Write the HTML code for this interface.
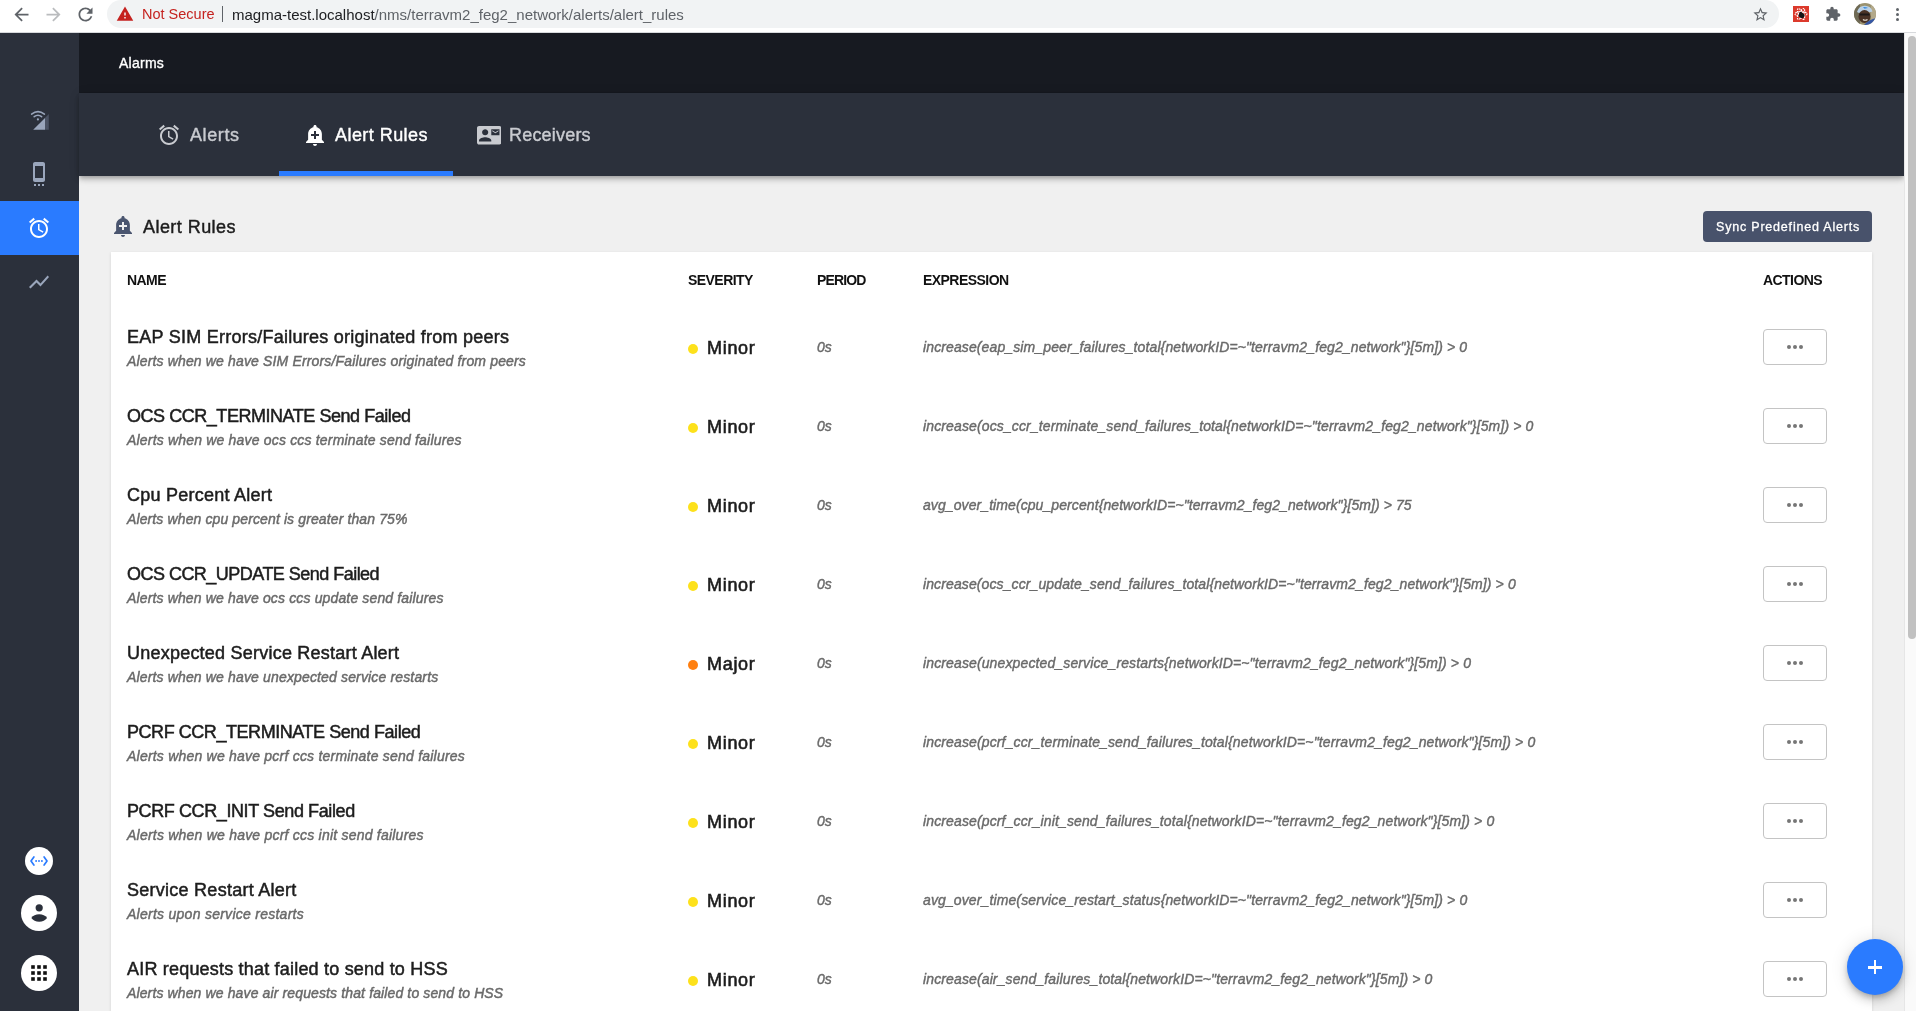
<!DOCTYPE html>
<html><head><meta charset="utf-8">
<style>
*{box-sizing:border-box;margin:0;padding:0}
html,body{width:1916px;height:1011px;overflow:hidden;background:#f0f0f0;font-family:"Liberation Sans",sans-serif}
.abs{position:absolute}
.t{position:absolute;white-space:nowrap;line-height:1;will-change:transform}
/* chrome */
#chrome{position:absolute;left:0;top:0;width:1916px;height:33px;background:#fff;border-bottom:1px solid #d7d9dc}
#pill{position:absolute;left:107px;top:0;width:1672px;height:28px;background:#f1f3f4;border-radius:0 0 14px 14px}
#pill2{position:absolute;left:107px;top:0px;width:1672px;height:28px;background:#f1f3f4;border-radius:14px}
/* sidebar */
#side{position:absolute;left:0;top:33px;width:79px;height:978px;background:#2b303b}
#header{position:absolute;left:79px;top:33px;width:1825px;height:60px;background:#171a21}
#tabs{position:absolute;left:79px;top:93px;width:1825px;height:83px;background:#2b303b;box-shadow:0 2px 4px -1px rgba(0,0,0,0.2),0 4px 5px 0 rgba(0,0,0,0.14),0 1px 10px 0 rgba(0,0,0,0.12)}
#scroll{position:absolute;left:1904px;top:33px;width:12px;height:978px;background:#fafafa;border-left:1px solid #e6e6e6}
#thumb{position:absolute;left:1908px;top:36px;width:8px;height:603px;background:#c1c1c1;border-radius:4px}
#card{position:absolute;left:111px;top:252px;width:1761px;height:780px;background:#fff;box-shadow:0 1px 3px rgba(0,0,0,0.12)}
.hd{font-size:14px;font-weight:bold;color:#111;letter-spacing:-0.55px;top:273.2px}
.ttl{font-size:18px;color:#1d1d1d;-webkit-text-stroke:0.5px #1d1d1d}
.sub{font-size:14px;font-style:italic;color:#6a6a6a;-webkit-text-stroke:0.45px #6a6a6a}
.sev{font-size:18px;color:#1d1d1d;-webkit-text-stroke:0.6px #1d1d1d;letter-spacing:0.7px}
.per{font-size:14px;font-style:italic;color:#6a6a6a;-webkit-text-stroke:0.4px #6a6a6a}
.exp{font-size:14px;font-style:italic;color:#6a6a6a;-webkit-text-stroke:0.4px #6a6a6a}
.dot{position:absolute;width:10px;height:10px;border-radius:5px}
.act{position:absolute;width:64px;height:36px;border:1px solid #c4c4c4;border-radius:4px;background:#fff}
.act i{position:absolute;top:15px;width:4px;height:4px;border-radius:2px;background:#767676}
</style></head><body>
<div id="chrome">
  <div id="pill2"></div>
</div>
<div id="side"></div>
<div id="header"></div>
<div id="tabs"></div>
<div id="scroll"></div>
<div id="thumb"></div>
<div id="card"></div>

<!-- header text -->
<div class="t" style="left:119px;top:56.2px;font-size:14px;color:#fff;letter-spacing:0.25px;-webkit-text-stroke:0.35px #fff">Alarms</div>
<!-- tabs -->
<svg class="abs" style="left:157px;top:123px" width="24" height="24" viewBox="0 0 24 24"><path fill="#c9cbd0" d="M22 5.72l-4.6-3.86-1.29 1.53 4.6 3.86L22 5.72zM7.88 3.39L6.6 1.86 2 5.71l1.29 1.53 4.59-3.85zM12.5 8H11v6l4.75 2.85.75-1.23-4-2.37V8zM12 4c-4.97 0-9 4.03-9 9s4.02 9 9 9c4.97 0 9-4.03 9-9s-4.03-9-9-9zm0 16c-3.87 0-7-3.13-7-7s3.13-7 7-7 7 3.13 7 7-3.13 7-7 7z"/></svg>
<div class="t" style="left:189.6px;top:125.8px;font-size:18px;color:#c9cbd0;letter-spacing:0.6px;-webkit-text-stroke:0.4px #c9cbd0">Alerts</div>
<svg class="abs" style="left:303px;top:123px" width="24" height="24" viewBox="0 0 24 24"><path fill="#fff" d="M10.01 21.01c0 1.1.89 1.99 1.99 1.99s1.99-.89 1.99-1.99h-3.98zm8.87-4.19V11c0-3.25-2.25-5.970-5.29-6.69v-.72C13.59 2.71 12.88 2 12 2s-1.59.71-1.59 1.59v.72C7.37 5.03 5.12 7.75 5.12 11v5.82L3 18.94V20h18v-1.06l-2.12-2.12zM16 13.01h-3v3h-2v-3H8V11h3V8h2v3h3v2.01z"/></svg>
<div class="t" style="left:335.3px;top:125.8px;font-size:18px;color:#fff;letter-spacing:0.45px;-webkit-text-stroke:0.4px #fff">Alert Rules</div>
<svg class="abs" style="left:476.5px;top:123px" width="24.5" height="24.5" viewBox="0 0 24 24"><path fill="#c9cbd0" d="M21 8V7l-3 2-3-2v1l3 2 3-2zm1-5H2C.9 3 0 3.9 0 5v14c0 1.1.9 2 2 2h20c1.1 0 1.99-.9 1.99-2L24 5c0-1.1-.9-2-2-2zM8 6c1.66 0 3 1.34 3 3s-1.34 3-3 3-3-1.34-3-3 1.34-3 3-3zm6 12H2v-1c0-2 4-3.1 6-3.1s6 1.1 6 3.1v1zm8-6h-8V6h8v6z"/></svg>
<div class="t" style="left:509.3px;top:125.8px;font-size:18px;color:#c9cbd0;letter-spacing:0.2px;-webkit-text-stroke:0.4px #c9cbd0">Receivers</div>
<div class="abs" style="left:279px;top:171px;width:174px;height:5px;background:#2a7bff"></div>
<!-- heading -->
<svg class="abs" style="left:110.7px;top:213.6px" width="24" height="24" viewBox="0 0 24 24"><path fill="#4a556f" d="M10.01 21.01c0 1.1.89 1.990 1.99 1.99s1.99-.89 1.99-1.99h-3.98zm8.87-4.19V11c0-3.25-2.25-5.97-5.29-6.69v-.72C13.59 2.71 12.88 2 12 2s-1.59.71-1.59 1.59v.72C7.37 5.03 5.12 7.75 5.12 11v5.82L3 18.94V20h18v-1.06l-2.12-2.12zM16 13.01h-3v3h-2v-3H8V11h3V8h2v3h3v2.01z"/></svg>
<div class="t" style="left:143.3px;top:217.8px;font-size:18px;color:#1d1d1d;letter-spacing:0.45px;-webkit-text-stroke:0.45px #1d1d1d">Alert Rules</div>
<div class="abs" style="left:1703px;top:211px;width:169px;height:31px;background:#48526b;border-radius:4px"></div>
<div class="t" style="left:1715.5px;top:220.7px;font-size:12.5px;color:#fff;letter-spacing:0.8px;-webkit-text-stroke:0.3px #fff">Sync Predefined Alerts</div>
<!-- FAB -->
<div class="abs" style="left:1847px;top:939px;width:56px;height:56px;border-radius:28px;background:#2a7bff;box-shadow:0 3px 5px -1px rgba(0,0,0,0.2),0 6px 10px 0 rgba(0,0,0,0.14),0 1px 18px 0 rgba(0,0,0,0.12)"></div>
<div class="abs" style="left:1868px;top:966px;width:14px;height:2.5px;background:#fff"></div>
<div class="abs" style="left:1873.75px;top:960px;width:2.5px;height:14px;background:#fff"></div>
<!-- sidebar icons -->
<svg class="abs" style="left:24px;top:104px" width="32" height="32" viewBox="0 0 32 32">
 <path fill="#9aa6bc" d="M9.2 25.8 L21 14 L21 25.8 Z"/>
 <path fill="#4b5364" d="M21 14 L24.8 10.1 L24.8 25.8 L21 25.8 Z"/>
 <path fill="none" stroke="#9aa6bc" stroke-width="1.6" stroke-linecap="round" d="M7.6 10.1 Q14 5.2 20.4 10.1"/>
 <path fill="none" stroke="#9aa6bc" stroke-width="1.6" stroke-linecap="round" d="M10.2 12.7 Q14 9.9 17.6 12.7"/>
 <circle cx="13.9" cy="15.4" r="1.1" fill="#9aa6bc"/>
</svg>
<svg class="abs" style="left:27px;top:161.8px" width="24" height="24" viewBox="0 0 24 24"><path fill="#9aa6bc" d="M7 24h2v-2H7v2zm4 0h2v-2h-2v2zm4 0h2v-2h-2v2zM16 .01L8 0C6.9 0 6 .9 6 2v16c0 1.1.9 2 2 2h8c1.1 0 2-.9 2-2V2c0-1.1-.9-1.99-2-1.99zM16 16H8V4h8v12z"/></svg>
<div class="abs" style="left:0;top:201px;width:79px;height:54px;background:#2a7bff"></div>
<svg class="abs" style="left:27px;top:216px" width="24" height="24" viewBox="0 0 24 24"><path fill="#fff" d="M22 5.72l-4.6-3.86-1.29 1.53 4.6 3.86L22 5.72zM7.88 3.39L6.6 1.86 2 5.710l1.29 1.53 4.59-3.85zM12.5 8H11v6l4.75 2.85.75-1.23-4-2.37V8zM12 4c-4.97 0-9 4.03-9 9s4.02 9 9 9c4.97 0 9-4.03 9-9s-4.03-9-9-9zm0 16c-3.87 0-7-3.13-7-7s3.13-7 7-7 7 3.130 7 7-3.13 7-7 7z"/></svg>
<svg class="abs" style="left:27px;top:270px" width="24" height="24" viewBox="0 0 24 24"><path fill="#9aa6bc" d="M3.5 18.49l6-6.01 4 4L22 6.92l-1.41-1.41-7.09 7.97-4-4L2 16.99z"/></svg>
<!-- bottom sidebar -->
<div class="abs" style="left:25px;top:847px;width:28px;height:28px;border-radius:14px;background:#fff"></div>
<svg class="abs" style="left:29px;top:851px" width="20" height="20" viewBox="0 0 20 20"><path fill="none" stroke="#2a7bff" stroke-width="1.7" stroke-linecap="round" stroke-linejoin="round" d="M4.9 6 L2 10 L4.9 14 M15.1 6 L18 10 L15.1 14"/><circle cx="7.1" cy="10" r="0.95" fill="#2a7bff"/><circle cx="10" cy="10" r="0.95" fill="#2a7bff"/><circle cx="12.9" cy="10" r="0.95" fill="#2a7bff"/></svg>
<div class="abs" style="left:21px;top:895px;width:36px;height:36px;border-radius:18px;background:#fff"></div>
<svg class="abs" style="left:21px;top:895px" width="36" height="36" viewBox="0 0 36 36"><circle cx="18.2" cy="12.8" r="3.6" fill="#2b303b"/><path d="M10.3 23 Q13 19.3 18.2 19.3 Q23.4 19.3 26.1 23 Q23.4 26.7 18.2 26.7 Q13 26.7 10.3 23Z" fill="#2b303b"/></svg>
<div class="abs" style="left:21px;top:955px;width:36px;height:36px;border-radius:18px;background:#fff"></div>
<svg class="abs" style="left:21px;top:955px" width="36" height="36" viewBox="0 0 36 36"><g fill="#111">
<rect x="10.2" y="10.2" width="3.6" height="3.6"/><rect x="16.2" y="10.2" width="3.6" height="3.6"/><rect x="22.2" y="10.2" width="3.6" height="3.6"/>
<rect x="10.2" y="16.2" width="3.6" height="3.6"/><rect x="16.2" y="16.2" width="3.6" height="3.6"/><rect x="22.2" y="16.2" width="3.6" height="3.6"/>
<rect x="10.2" y="22.2" width="3.6" height="3.6"/><rect x="16.2" y="22.2" width="3.6" height="3.6"/><rect x="22.2" y="22.2" width="3.6" height="3.6"/></g></svg>
<!-- chrome contents -->
<svg class="abs" style="left:10.5px;top:3.5px" width="21" height="21" viewBox="0 0 24 24"><path fill="#5f6368" d="M20 11H7.83l5.59-5.59L12 4l-8 8 8 8 1.41-1.41L7.83 13H20v-2z"/></svg>
<svg class="abs" style="left:42.5px;top:3.5px" width="21" height="21" viewBox="0 0 24 24"><path fill="#babcbe" d="M12 4l-1.41 1.41L16.17 11H4v2h12.17l-5.58 5.59L12 20l8-8z"/></svg>
<svg class="abs" style="left:74.5px;top:3.5px" width="21" height="21" viewBox="0 0 24 24"><path fill="#5f6368" d="M17.65 6.35C16.2 4.9 14.21 4 12 4c-4.42 0-7.99 3.58-7.99 8s3.57 8 7.99 8c3.73 0 6.84-2.55 7.73-6h-2.08c-.82 2.33-3.04 4-5.65 4-3.31 0-6-2.69-6-6s2.69-6 6-6c1.66 0 3.14.69 4.22 1.78L13 11h7V4l-2.35 2.35z"/></svg>
<svg class="abs" style="left:116px;top:5px" width="18" height="18" viewBox="0 0 24 24"><path fill="#c5221f" d="M1 21h22L12 2 1 21zm12-3h-2v-2h2v2zm0-4h-2v-4h2v4z"/></svg>
<div class="t" style="left:141.6px;top:7px;font-size:14.5px;color:#c5221f">Not Secure</div>
<div class="abs" style="left:222px;top:6px;width:1px;height:16px;background:#5f6368"></div>
<div class="t" style="left:232.4px;top:7px;font-size:15px;color:#202124">magma-test.localhost<span style="color:#5f6368">/nms/terravm2_feg2_network/alerts/alert_rules</span></div>
<svg class="abs" style="left:1752.4px;top:5.9px" width="17" height="17" viewBox="0 0 24 24"><path fill="#5f6368" d="M22 9.24l-7.19-.62L12 2 9.19 8.63 2 9.24l5.46 4.73L5.82 21 12 17.27 18.18 21l-1.63-7.03L22 9.24zM12 15.4l-3.76 2.27 1-4.28-3.32-2.88 4.38-.38L12 6.1l1.71 4.04 4.38.38-3.32 2.88 1 4.28L12 15.4z"/></svg>
<svg class="abs" style="left:1793px;top:6px" width="16" height="16" viewBox="0 0 16 16"><rect width="16" height="16" fill="#dc3a2c"/>
<g fill="none" stroke="#fff" stroke-width="1.1" stroke-dasharray="1.6 0.8"><ellipse cx="8" cy="8" rx="6" ry="2.4"/><ellipse cx="8" cy="8" rx="6" ry="2.4" transform="rotate(60 8 8)"/><ellipse cx="8" cy="8" rx="6" ry="2.4" transform="rotate(120 8 8)"/></g>
<ellipse cx="8.6" cy="9.4" rx="3" ry="2.6" fill="#151515" transform="rotate(35 8.6 9.4)"/><circle cx="7.6" cy="6.9" r="1.2" fill="#151515"/></svg>
<svg class="abs" style="left:1824.7px;top:6.2px" width="16" height="16" viewBox="0 0 24 24"><path fill="#5f6368" d="M20.5 11H19V7c0-1.1-.9-2-2-2h-4V3.5C13 2.12 11.88 1 10.5 1S8 2.12 8 3.5V5H4c-1.1 0-1.99.9-1.99 2v3.8H3.5c1.49 0 2.7 1.21 2.7 2.7s-1.21 2.7-2.7 2.7H2V20c0 1.1.9 2 2 2h3.8v-1.5c0-1.49 1.21-2.7 2.7-2.7 1.49 0 2.7 1.21 2.7 2.7V22H17c1.1 0 2-.9 2-2v-4h1.5c1.38 0 2.5-1.12 2.5-2.5S21.88 11 20.5 11z"/></svg>
<svg class="abs" style="left:1854px;top:3px" width="22" height="22" viewBox="0 0 22 22"><defs><clipPath id="avc"><circle cx="11" cy="11" r="11"/></clipPath></defs><g clip-path="url(#avc)">
<rect width="22" height="22" fill="#9a9270"/><rect x="0" y="0" width="6" height="22" fill="#6f6a55"/><rect x="17" y="0" width="5" height="22" fill="#b3a98a"/>
<path d="M3 9 Q5 2.5 11 2.8 Q17 3 18.5 8.5 L16 9.2 Q11 7.5 5 10 Z" fill="#b9d0e6"/><path d="M9 4 Q12 3.5 14 5 L10.5 5.8Z" fill="#3a8ee0"/>
<ellipse cx="10.5" cy="13.5" rx="6" ry="6.5" fill="#4a3326"/><rect x="5.5" y="10.5" width="10" height="2" fill="#1e1a18"/>
<path d="M9 16.5 Q11 18 13.5 16.5" stroke="#e9e2d6" stroke-width="1.2" fill="none"/>
<path d="M10 22 Q14 17 22 15 L22 22 Z" fill="#3457a6"/></g></svg>
<div class="abs" style="left:1896px;top:8px;width:3px;height:3px;border-radius:1.5px;background:#5f6368"></div>
<div class="abs" style="left:1896px;top:13px;width:3px;height:3px;border-radius:1.5px;background:#5f6368"></div>
<div class="abs" style="left:1896px;top:18px;width:3px;height:3px;border-radius:1.5px;background:#5f6368"></div>
<div class="t hd" style="left:126.6px">NAME</div>
<div class="t hd" style="left:688.3px">SEVERITY</div>
<div class="t hd" style="left:817.2px;letter-spacing:-0.85px">PERIOD</div>
<div class="t hd" style="left:923.4px">EXPRESSION</div>
<div class="t hd" style="left:1763.4px">ACTIONS</div>
<div class="t ttl" style="letter-spacing:0.255px;left:126.6px;top:327.76px">EAP SIM Errors/Failures originated from peers</div>
<div class="t sub" style="letter-spacing:0.150px;left:127px;top:354.15px">Alerts when we have SIM Errors/Failures originated from peers</div>
<div class="dot" style="left:688px;top:344px;background:#fde11b"></div>
<div class="t sev" style="left:706.5px;top:338.96px">Minor</div>
<div class="t per" style="left:817.4px;top:340.15px">0s</div>
<div class="t exp" style="letter-spacing:0.115px;left:923px;top:339.75px">increase(eap_sim_peer_failures_total{networkID=~"terravm2_feg2_network"}[5m]) &gt; 0</div>
<div class="act" style="left:1763px;top:329px"><i style="left:23px"></i><i style="left:29px"></i><i style="left:35px"></i></div>
<div class="t ttl" style="letter-spacing:-0.457px;left:126.6px;top:406.76px">OCS CCR_TERMINATE Send Failed</div>
<div class="t sub" style="letter-spacing:0.184px;left:127px;top:433.15px">Alerts when we have ocs ccs terminate send failures</div>
<div class="dot" style="left:688px;top:423px;background:#fde11b"></div>
<div class="t sev" style="left:706.5px;top:417.96px">Minor</div>
<div class="t per" style="left:817.4px;top:419.15px">0s</div>
<div class="t exp" style="letter-spacing:0.130px;left:923px;top:418.75px">increase(ocs_ccr_terminate_send_failures_total{networkID=~"terravm2_feg2_network"}[5m]) &gt; 0</div>
<div class="act" style="left:1763px;top:408px"><i style="left:23px"></i><i style="left:29px"></i><i style="left:35px"></i></div>
<div class="t ttl" style="letter-spacing:0.238px;left:126.6px;top:485.76px">Cpu Percent Alert</div>
<div class="t sub" style="letter-spacing:0.117px;left:127px;top:512.15px">Alerts when cpu percent is greater than 75%</div>
<div class="dot" style="left:688px;top:502px;background:#fde11b"></div>
<div class="t sev" style="left:706.5px;top:496.96px">Minor</div>
<div class="t per" style="left:817.4px;top:498.15px">0s</div>
<div class="t exp" style="letter-spacing:0.084px;left:923px;top:497.75px">avg_over_time(cpu_percent{networkID=~"terravm2_feg2_network"}[5m]) &gt; 75</div>
<div class="act" style="left:1763px;top:487px"><i style="left:23px"></i><i style="left:29px"></i><i style="left:35px"></i></div>
<div class="t ttl" style="letter-spacing:-0.526px;left:126.6px;top:564.76px">OCS CCR_UPDATE Send Failed</div>
<div class="t sub" style="letter-spacing:0.143px;left:127px;top:591.15px">Alerts when we have ocs ccs update send failures</div>
<div class="dot" style="left:688px;top:581px;background:#fde11b"></div>
<div class="t sev" style="left:706.5px;top:575.96px">Minor</div>
<div class="t per" style="left:817.4px;top:577.15px">0s</div>
<div class="t exp" style="letter-spacing:0.110px;left:923px;top:576.75px">increase(ocs_ccr_update_send_failures_total{networkID=~"terravm2_feg2_network"}[5m]) &gt; 0</div>
<div class="act" style="left:1763px;top:566px"><i style="left:23px"></i><i style="left:29px"></i><i style="left:35px"></i></div>
<div class="t ttl" style="letter-spacing:0.224px;left:126.6px;top:643.76px">Unexpected Service Restart Alert</div>
<div class="t sub" style="letter-spacing:0.151px;left:127px;top:670.15px">Alerts when we have unexpected service restarts</div>
<div class="dot" style="left:688px;top:660px;background:#ff7f0f"></div>
<div class="t sev" style="left:706.5px;top:654.96px">Major</div>
<div class="t per" style="left:817.4px;top:656.15px">0s</div>
<div class="t exp" style="letter-spacing:0.125px;left:923px;top:655.75px">increase(unexpected_service_restarts{networkID=~"terravm2_feg2_network"}[5m]) &gt; 0</div>
<div class="act" style="left:1763px;top:645px"><i style="left:23px"></i><i style="left:29px"></i><i style="left:35px"></i></div>
<div class="t ttl" style="letter-spacing:-0.447px;left:126.6px;top:722.76px">PCRF CCR_TERMINATE Send Failed</div>
<div class="t sub" style="letter-spacing:0.215px;left:127px;top:749.15px">Alerts when we have pcrf ccs terminate send failures</div>
<div class="dot" style="left:688px;top:739px;background:#fde11b"></div>
<div class="t sev" style="left:706.5px;top:733.96px">Minor</div>
<div class="t per" style="left:817.4px;top:735.15px">0s</div>
<div class="t exp" style="letter-spacing:0.132px;left:923px;top:734.75px">increase(pcrf_ccr_terminate_send_failures_total{networkID=~"terravm2_feg2_network"}[5m]) &gt; 0</div>
<div class="act" style="left:1763px;top:724px"><i style="left:23px"></i><i style="left:29px"></i><i style="left:35px"></i></div>
<div class="t ttl" style="letter-spacing:-0.400px;left:126.6px;top:801.76px">PCRF CCR_INIT Send Failed</div>
<div class="t sub" style="letter-spacing:0.221px;left:127px;top:828.15px">Alerts when we have pcrf ccs init send failures</div>
<div class="dot" style="left:688px;top:818px;background:#fde11b"></div>
<div class="t sev" style="left:706.5px;top:812.96px">Minor</div>
<div class="t per" style="left:817.4px;top:814.15px">0s</div>
<div class="t exp" style="letter-spacing:0.133px;left:923px;top:813.75px">increase(pcrf_ccr_init_send_failures_total{networkID=~"terravm2_feg2_network"}[5m]) &gt; 0</div>
<div class="act" style="left:1763px;top:803px"><i style="left:23px"></i><i style="left:29px"></i><i style="left:35px"></i></div>
<div class="t ttl" style="letter-spacing:0.260px;left:126.6px;top:880.76px">Service Restart Alert</div>
<div class="t sub" style="letter-spacing:0.264px;left:127px;top:907.15px">Alerts upon service restarts</div>
<div class="dot" style="left:688px;top:897px;background:#fde11b"></div>
<div class="t sev" style="left:706.5px;top:891.96px">Minor</div>
<div class="t per" style="left:817.4px;top:893.15px">0s</div>
<div class="t exp" style="letter-spacing:0.117px;left:923px;top:892.75px">avg_over_time(service_restart_status{networkID=~"terravm2_feg2_network"}[5m]) &gt; 0</div>
<div class="act" style="left:1763px;top:882px"><i style="left:23px"></i><i style="left:29px"></i><i style="left:35px"></i></div>
<div class="t ttl" style="letter-spacing:0.197px;left:126.6px;top:959.76px">AIR requests that failed to send to HSS</div>
<div class="t sub" style="letter-spacing:0.126px;left:127px;top:986.15px">Alerts when we have air requests that failed to send to HSS</div>
<div class="dot" style="left:688px;top:976px;background:#fde11b"></div>
<div class="t sev" style="left:706.5px;top:970.96px">Minor</div>
<div class="t per" style="left:817.4px;top:972.15px">0s</div>
<div class="t exp" style="letter-spacing:0.126px;left:923px;top:971.75px">increase(air_send_failures_total{networkID=~"terravm2_feg2_network"}[5m]) &gt; 0</div>
<div class="act" style="left:1763px;top:961px"><i style="left:23px"></i><i style="left:29px"></i><i style="left:35px"></i></div>
</body></html>
